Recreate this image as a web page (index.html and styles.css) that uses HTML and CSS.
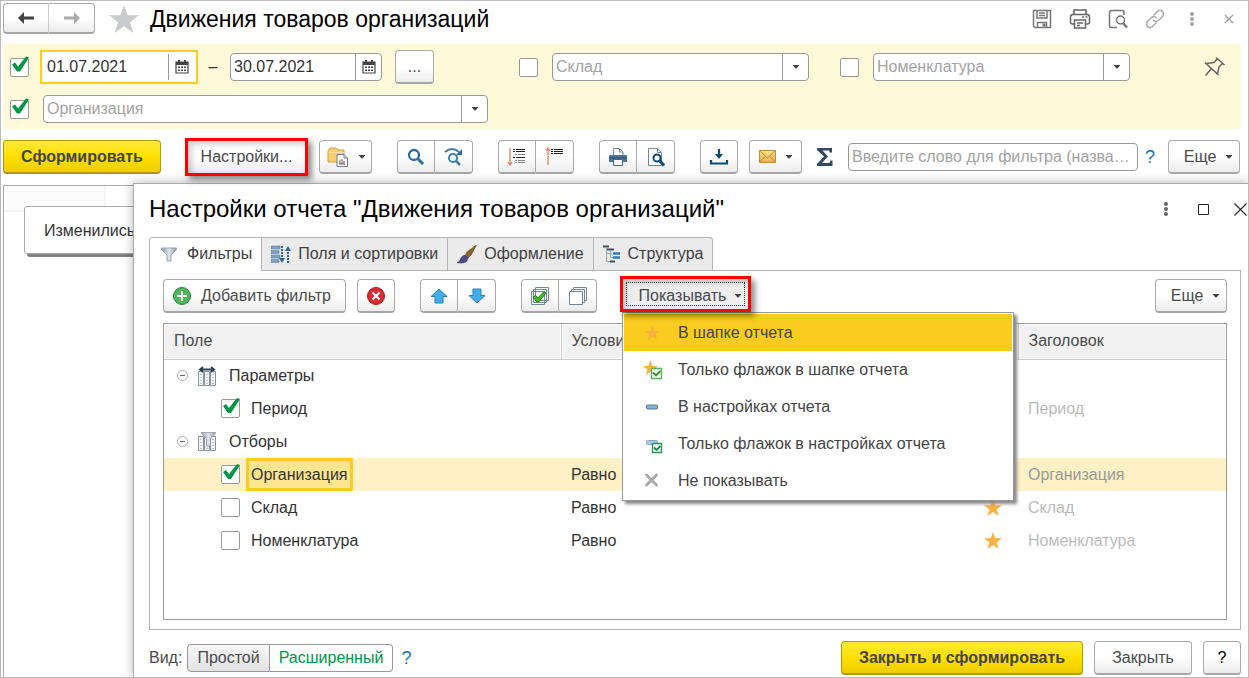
FILE: index.html
```html
<!DOCTYPE html>
<html lang="ru">
<head>
<meta charset="utf-8">
<title>Движения товаров организаций</title>
<link rel="stylesheet" href="styles.css">
</head>
<body>
<svg class="defs" aria-hidden="true">
  <defs>
    <linearGradient id="funnel-fill" x1="0" x2="1"><stop offset="0" stop-color="#8d99a6"/><stop offset=".5" stop-color="#dfe5ec"/><stop offset="1" stop-color="#8f9ba8"/></linearGradient>
    <linearGradient id="mail-fill" x1="0" y1="0" x2="0" y2="1"><stop offset="0" stop-color="#fbe08f"/><stop offset="1" stop-color="#e9b04e"/></linearGradient>
    <symbol id="star" viewBox="0 0 30 28"><path d="M15 0l3.700 10.300H30l-9 6.900L24.300 28 15 21.300 5.700 28 9 17.200 0 10.300h11.300z"/></symbol>
    <symbol id="caret" viewBox="0 0 6 4"><path d="M0 0h6v.5L3.500 3.500h-1L0 .5z" fill="#444"/></symbol>
    <symbol id="calendar" viewBox="0 0 14 14"><path d="M1 2h12v11H1z" fill="#fff" stroke="#444" stroke-width="1.200"/><path d="M1 2h12v3H1zM3 0h2v3H3zM9 0h2v3H9z" fill="#444"/><path d="M3 6.500h2v1.500H3zM6 6.500h2v1.500H6zM9 6.500h2v1.500H9zM3 9.500h2V11H3zM6 9.500h2V11H6zM9 9.500h2V11H9z" fill="#444"/></symbol>
    <symbol id="dots" viewBox="0 0 4 14"><circle cx="2" cy="2" r="2"/><circle cx="2" cy="7" r="2"/><circle cx="2" cy="12" r="2"/></symbol>
  </defs>
</svg>
<main class="app">
  <header class="titlebar">
    <div class="group nav">
      <button class="btn" type="button" aria-label="Назад"><svg width="18" height="14" viewBox="0 0 18 14"><path d="M7 1L1 7l6 6V8.500h10v-3H7z" fill="#444"/></svg></button>
      <button class="btn" type="button" aria-label="Вперед"><svg width="18" height="14" viewBox="0 0 18 14"><path d="M11 1l6 6-6 6V8.500H1v-3h10z" fill="#aaa"/></svg></button>
    </div>
    <svg class="favorite" width="30" height="28"><use href="#star"/></svg>
    <h1>Движения товаров организаций</h1>
    <div class="title-icons">
      <button type="button" aria-label="Сохранить"><svg width="20" height="20" viewBox="0 0 20 20" fill="none" stroke="#777" stroke-width="1.500"><path d="M1.500 1.500h17v17H3l-1.500-1.500zM5 1.500v7.500h10V1.500M7 4h6M7 6.500h6M5.500 18v-4.500h9V18"/><path d="M10.500 14.500h3v3h-3z" fill="#777" stroke="none"/></svg></button>
      <button type="button" aria-label="Печать"><svg width="22" height="20" viewBox="0 0 22 20" fill="none" stroke="#666" stroke-width="1.500"><path d="M5 5.500v-4.500h12v4.500M5 15H3.500Q1.500 15 1.500 13V8q0-2.500 2.500-2.500h14q2.500 0 2.500 2.500v5q0 2-2 2H17M5.500 11h11v8h-11zM8 14h6M8 16.500h3"/><path d="M13 8h2M16.500 8h2"/></svg></button>
      <button type="button" aria-label="Предварительный просмотр"><svg width="20" height="20" viewBox="0 0 20 20" fill="none" stroke="#777" stroke-width="1.500"><path d="M9 18.500H3.500q-2 0-2-2v-13q0-2 2-2h11q1.500 0 1.500 2V6"/><circle cx="12.500" cy="11" r="4"/><path d="M15 14l4 4.500" stroke-width="2.500"/></svg></button>
      <button type="button" aria-label="Ссылка"><svg width="20" height="20" viewBox="0 0 20 20" fill="none" stroke="#aaa" stroke-width="1.500"><path d="M8.500 6.500l4-4c3-3 8 1 5 5l-4 4c-2 1.500-4 1-5-.5M11.500 13.500l-4 4c-3 3-8-1-5-5l4-4c2-1.500 4-1 5 .5"/></svg></button>
      <button type="button" aria-label="Меню"><svg width="20" height="14" fill="#a5a5a5"><use href="#dots"/></svg></button>
      <button type="button" aria-label="Закрыть окно"><svg width="20" height="10" viewBox="0 0 20 10"><path d="M6 1l8 8M14 1L6 9" stroke="#999" stroke-width="1.300"/></svg></button>
    </div>
  </header>

  <section class="filters">
    <div class="filter-row">
      <input class="check" type="checkbox" checked aria-label="Период">
      <div class="field focused"><input type="text" value="01.07.2021" aria-label="Начало периода"><button type="button" aria-label="Календарь"><svg width="14" height="14"><use href="#calendar"/></svg></button></div>
      <span class="dash">–</span>
      <div class="field date"><input type="text" value="30.07.2021" aria-label="Конец периода"><button type="button" aria-label="Календарь"><svg width="14" height="14"><use href="#calendar"/></svg></button></div>
      <button class="btn small" type="button">...</button>
      <div class="filter-item">
        <input class="check" type="checkbox" aria-label="Отбор по складу">
        <div class="field combo"><input type="text" placeholder="Склад" aria-label="Склад"><button type="button" aria-label="Выбрать"><svg width="6" height="4"><use href="#caret"/></svg></button></div>
      </div>
      <div class="filter-item second">
        <input class="check" type="checkbox" aria-label="Отбор по номенклатуре">
        <div class="field combo"><input type="text" placeholder="Номенклатура" aria-label="Номенклатура"><button type="button" aria-label="Выбрать"><svg width="6" height="4"><use href="#caret"/></svg></button></div>
      </div>
      <button class="pin" type="button" aria-label="Закрепить"><svg width="22" height="22" viewBox="0 0 22 22" fill="none" stroke="#666" stroke-width="1.500"><path d="M12 1.500l8.500 7.500M13.500 2.500L10 6.500 2 7.500 13.500 18l1.500-7 4-4M1 6.500l2 1.500M7 13l-5.500 6.500M13 17.500l1.500 1.500"/></svg></button>
    </div>
    <div class="filter-row">
      <input class="check" type="checkbox" checked aria-label="Отбор по организации">
      <div class="field combo wide"><input type="text" placeholder="Организация" aria-label="Организация"><button type="button" aria-label="Выбрать"><svg width="6" height="4"><use href="#caret"/></svg></button></div>
    </div>
  </section>

  <div class="toolbar">
    <button class="btn primary generate" type="button">Сформировать</button>
    <div class="marked settings"><button class="btn" type="button">Настройки...</button></div>
    <button class="btn drop variants" type="button" aria-label="Варианты отчета"><svg width="22" height="20" viewBox="0 0 22 20"><path d="M1 4l2-3h6l2 2h6v12H1z" fill="#f8cf74" stroke="#d79b35"/><path d="M1.500 5.500H17" stroke="#fbe3a6"/><path d="M10 7.500h7l3.500 3.500v8.500H10z" fill="#fff" stroke="#6d7f92"/><path d="M17 7.500V11h3.500" fill="none" stroke="#6d7f92"/><path d="M13 17v-4" stroke="#3b9b3b"/><path d="M15 17v-5" stroke="#d33"/><path d="M17 17v-3M12 17h6" stroke="#555"/></svg><svg width="6" height="4"><use href="#caret"/></svg></button>
    <div class="group gap-wide">
      <button class="btn" type="button" aria-label="Найти"><svg width="18" height="18" viewBox="0 0 18 18" fill="none" stroke="#2a6ea5"><circle cx="7" cy="7" r="5" stroke-width="2.300"/><path d="M11 11l5 5" stroke-width="3"/></svg></button>
      <button class="btn" type="button" aria-label="Найти далее"><svg width="20" height="20" viewBox="0 0 20 20" fill="none" stroke="#3f7fae"><circle cx="9" cy="11" r="4" stroke-width="2"/><path d="M12 14l4 4" stroke-width="2.500"/><path d="M1 5q7-6 14 0" stroke-width="2"/><path d="M18 2v6h-6z" fill="#2a6ea5" stroke="none"/></svg></button>
    </div>
    <div class="group gap-wide">
      <button class="btn" type="button" aria-label="Развернуть"><svg width="20" height="20" viewBox="0 0 20 20"><path d="M3 1v17M1 15l2 3 2-3" fill="none" stroke="#f08050" stroke-width="1.300"/><path d="M6 2.500h2M9 2.500h9M6 4.500h2M9 4.500h9M6 10.500h2M9 10.500h9" stroke="#222"/><path d="M8 7.500h2M11 7.500h7M8 13.500h2M11 13.500h7M8 15.500h2M11 15.500h7" stroke="#888"/></svg></button>
      <button class="btn" type="button" aria-label="Свернуть"><svg width="20" height="20" viewBox="0 0 20 20"><path d="M3 18V1M1 4l2-3 2 3" fill="none" stroke="#f08050" stroke-width="1.300"/><path d="M6 2.500h2M9 2.500h9M6 4.500h2M9 4.500h9M6 6.500h2M9 6.500h9" stroke="#222"/></svg></button>
    </div>
    <div class="group gap-wide">
      <button class="btn" type="button" aria-label="Печать"><svg width="20" height="20" viewBox="0 0 20 20"><path d="M5.500 9V1.500h6L15 5v4" fill="#fff" stroke="#71869b"/><path d="M11.500 1.500V5H15" fill="none" stroke="#71869b"/><path d="M2 8h16q1 0 1 1v6H1V9q0-1 1-1z" fill="#4d7396"/><path d="M1 11h18" stroke="#294c6c"/><path d="M5.500 12.500h9v6h-9z" fill="#fff" stroke="#4a6682"/></svg></button>
      <button class="btn" type="button" aria-label="Просмотр"><svg width="20" height="20" viewBox="0 0 20 20"><path d="M2.500 1.500h9L15.500 5.500V18.500h-13z" fill="#fff" stroke="#71869b"/><path d="M11.500 1.500V5.500h4" fill="none" stroke="#71869b"/><circle cx="11" cy="11" r="3.500" fill="#fff" stroke="#0d4b78" stroke-width="2"/><path d="M13.500 13.500l4.500 5" stroke="#0d4b78" stroke-width="3"/></svg></button>
    </div>
    <button class="btn icon gap-wide" type="button" aria-label="Сохранить"><svg width="20" height="18" viewBox="0 0 20 18" fill="none" stroke="#0d4b78" stroke-width="2.200"><path d="M10 1v7M2 12v3.500h16V12"/><path d="M6 6h8l-4 5z" fill="#0d4b78" stroke="none"/></svg></button>
    <button class="btn drop" type="button" aria-label="Отправить"><svg width="17" height="13" viewBox="0 0 17 13"><path d="M.5.500h16v12H.5z" fill="url(#mail-fill)" stroke="#c98c2b"/><path d="M1 1l7.500 7L16 1M1 12l5-5.500M16 12l-5-5.500" fill="none" stroke="#c98c2b"/></svg><svg width="6" height="4"><use href="#caret"/></svg></button>
    <svg class="sigma" width="18" height="20" viewBox="0 0 18 20"><path d="M1 1h15v4.500h-2L13 3.500H6.500l5.500 6-6 6.500h7.500l1-2.500h2V19H1v-2l7-7.500L1 3z" fill="#34495e"/></svg>
    <input class="search" type="text" placeholder="Введите слово для фильтра (название товара, покупателя и пр.)" aria-label="Фильтр">
    <a class="help" href="#">?</a>
    <button class="btn more" type="button">Еще<svg width="6" height="4"><use href="#caret"/></svg></button>
  </div>

  <section class="sheet">
    <div class="sheet-head"></div>
    <div class="notice">Изменились</div>
  </section>

  <section class="dialog" role="dialog" aria-labelledby="dialog-title">
    <header class="dialog-head">
      <h2 id="dialog-title">Настройки отчета "Движения товаров организаций"</h2>
      <div class="window-buttons">
        <button type="button" aria-label="Меню"><svg width="4" height="14" fill="#666"><use href="#dots"/></svg></button>
        <button type="button" aria-label="Развернуть"><svg width="11" height="11" viewBox="0 0 11 11"><path d="M.5.500h10v10H.5z" fill="none" stroke="#222"/></svg></button>
        <button type="button" aria-label="Закрыть"><svg width="13" height="13" viewBox="0 0 13 13"><path d="M.5.500l12 12M12.500.500l-12 12" stroke="#333" stroke-width="1.300"/></svg></button>
      </div>
    </header>
    <div class="tabs" role="tablist">
      <button class="tab active" type="button" role="tab" aria-selected="true"><svg width="16" height="15" viewBox="0 0 16 15"><path d="M.5 1h15v1.500L10 8v6H6V8L.5 2.500z" fill="url(#funnel-fill)" stroke="#9aa5b1"/></svg>Фильтры</button>
      <button class="tab" type="button" role="tab"><svg width="20" height="19" viewBox="0 0 20 19"><path d="M0 1h9v3H0zM0 5.500h8v3H0zM0 10h9v3H0zM0 14.500h8v3H0z" fill="#7ea2bf" stroke="#5c7f9d" stroke-width=".6"/><path d="M11 1v14M17 18V3" stroke="#2d6391" stroke-width="2" stroke-dasharray="2 1"/><path d="M8 13h6l-3 5zM14 6h6l-3-5z" fill="#2d6391"/></svg>Поля и сортировки</button>
      <button class="tab" type="button" role="tab"><svg width="20" height="19" viewBox="0 0 20 19"><path d="M19.500 0L10 7l-2 4 3 2 3-3z" fill="#8a6424" stroke="#5e4316" stroke-width=".7"/><path d="M8 10.500l3 2.500c0 4-5 6-11 4.500 3-1 3-2.500 4-4.500 1-2 2.500-2.500 4-2.500z" fill="#4c4d87" stroke="#303060" stroke-width=".6"/></svg>Оформление</button>
      <button class="tab" type="button" role="tab"><svg width="18" height="18" viewBox="0 0 18 18"><path d="M0 1.500h6M4 4.500h7M7 16.500h5" stroke="#3d5366" stroke-width="2"/><path d="M3.500 2v14.500H7M3.500 8.500H9M7.500 5v7.500H10" fill="none" stroke="#9aa5ad"/><path d="M10 8.500h7M10 12.500h7" stroke="#2c7db8" stroke-width="2.500"/></svg>Структура</button>
    </div>
    <div class="panel">
      <div class="panel-tools">
        <button class="btn add" type="button"><svg width="18" height="18" viewBox="0 0 18 18"><circle cx="9" cy="9" r="8.500" fill="#4db75a" stroke="#278a35"/><path d="M9 4v10M4 9h10" stroke="#fff" stroke-width="2"/></svg>Добавить фильтр</button>
        <button class="btn icon" type="button" aria-label="Удалить"><svg width="18" height="18" viewBox="0 0 18 18"><circle cx="9" cy="9" r="8.500" fill="#d92c31" stroke="#ab1d22"/><path d="M5.500 5.500l7 7M12.500 5.500l-7 7" stroke="#fff" stroke-width="2"/></svg></button>
        <div class="group gap-wide">
          <button class="btn" type="button" aria-label="Вверх"><svg width="18" height="16" viewBox="0 0 18 16"><path d="M9 1l8 7.500h-4V15H5V8.500H1z" fill="#42adea" stroke="#2c7fb4"/></svg></button>
          <button class="btn" type="button" aria-label="Вниз"><svg width="18" height="16" viewBox="0 0 18 16"><path d="M9 15L1 7.500h4V1h8v6.500h4z" fill="#42adea" stroke="#2c7fb4"/></svg></button>
        </div>
        <div class="group gap-wide">
          <button class="btn" type="button" aria-label="Установить флажки"><svg width="20" height="20" viewBox="0 0 20 20" fill="#fff" stroke="#71869b"><path d="M5.500 1.500h13v13h-13zM3.500 3.500h13v13h-13zM1.500 5.500h13v13h-13z"/><path d="M3 11l2.500-1.500L8 12l6-6.500L16 7l-7.500 9H7z" fill="#3fc523" stroke="#187b12"/></svg></button>
          <button class="btn" type="button" aria-label="Снять флажки"><svg width="20" height="20" viewBox="0 0 20 20" fill="#fff" stroke="#71869b"><path d="M5.500 1.500h13v13h-13z"/><path d="M3.500 3.500h13v13h-13z"/><path d="M1.500 5.500h13v13h-13z"/></svg></button>
        </div>
        <div class="menu-anchor">
          <div class="marked show"><button class="btn" type="button" aria-haspopup="menu" aria-expanded="true"><span>Показывать</span><svg width="6" height="4"><use href="#caret"/></svg></button></div>
          <div class="menu" role="menu">
            <button class="current" type="button" role="menuitem"><svg width="22" height="20" viewBox="0 0 22 20"><path d="M10.500 2l2 6H18l-4.500 3.500 1.800 5.500-4.800-3.300L5.700 17l1.800-5.500L3 8h5.500z" fill="#fbb040"/></svg>В шапке отчета</button>
            <button type="button" role="menuitem"><svg width="22" height="20" viewBox="0 0 22 20"><path d="M8.500 0l2 6H16l-4.500 3.500 1.800 5.500-4.800-3.300L3.700 15l1.800-5.500L1 6h5.500z" fill="#fbb040"/><path d="M9.500 8.500h10v10h-10z" fill="#fff" stroke="#4cb950" stroke-width="1.300"/><path d="M11 12.500l3 3 4.500-4.500" fill="none" stroke="#388e20" stroke-width="1.800"/></svg>Только флажок в шапке отчета</button>
            <button type="button" role="menuitem"><svg width="22" height="20" viewBox="0 0 22 20"><rect x="4.500" y="8" width="11" height="4" rx="1" fill="#8db0cd" stroke="#4f7ba0"/></svg>В настройках отчета</button>
            <button type="button" role="menuitem"><svg width="22" height="20" viewBox="0 0 22 20"><rect x="4.500" y="6.500" width="11" height="4" rx="1" fill="#a9c8ec" stroke="#83a7d0"/><path d="M10.500 9.500h9v9h-9z" fill="#fff" stroke="#219653" stroke-width="1.300"/><path d="M12 13.500l2.500 2.500 4-4" fill="none" stroke="#178745" stroke-width="1.800"/></svg>Только флажок в настройках отчета</button>
            <button type="button" role="menuitem"><svg width="22" height="20" viewBox="0 0 22 20"><path d="M4.500 4l10 10M14.500 4l-10 10" stroke="#aaa" stroke-width="3" stroke-linecap="round"/></svg>Не показывать</button>
          </div>
        </div>
        <button class="btn more" type="button">Еще<svg width="6" height="4"><use href="#caret"/></svg></button>
      </div>
      <div class="grid">
        <table>
          <colgroup><col class="c-field"><col class="c-cond"><col><col class="c-mode"><col class="c-title"></colgroup>
          <thead><tr><th>Поле</th><th>Условие</th><th></th><th></th><th>Заголовок</th></tr></thead>
          <tbody>
            <tr><td><div class="node"><svg width="11" height="11" viewBox="0 0 11 11" fill="none"><circle cx="5.500" cy="5.500" r="5" stroke="#aaa"/><path d="M3 5.500h5" stroke="#666"/></svg><svg width="18" height="20" viewBox="0 0 18 20"><path d="M.5 5.500h5v14h-5zM6.500 5.500h5v14h-5zM12.500 5.500h5v14h-5z" fill="#f3f5f7" stroke="#8795a1"/><path d="M3 8v10M9 8v10M15 8v10" stroke="#8795a1" stroke-dasharray="1 2"/><path d="M3 3.500h12M5 1L2 3.500 5 6M13 1l3 2.500L13 6" fill="none" stroke="#2d4053" stroke-width="1.800"/></svg>Параметры</div></td><td></td><td></td><td></td><td></td></tr>
            <tr><td><label class="leaf"><input class="check" type="checkbox" checked><span>Период</span></label></td><td></td><td></td><td></td><td>Период</td></tr>
            <tr><td><div class="node"><svg width="11" height="11" viewBox="0 0 11 11" fill="none"><circle cx="5.500" cy="5.500" r="5" stroke="#aaa"/><path d="M3 5.500h5" stroke="#666"/></svg><svg width="18" height="20" viewBox="0 0 18 20"><path d="M.5 4.500h5v14h-5zM6.500 4.500h5v14h-5zM12.500 4.500h5v14h-5z" fill="#f3f5f7" stroke="#8795a1"/><path d="M3 7v10M9 7v10M15 7v10" stroke="#8795a1" stroke-dasharray="1 2"/><path d="M3 .5h15L12.500 7v7h-4V7z" fill="url(#funnel-fill)" stroke="#8795a1" stroke-width=".7"/></svg>Отборы</div></td><td></td><td></td><td></td><td></td></tr>
            <tr class="selected"><td><label class="leaf"><input class="check" type="checkbox" checked><span>Организация</span></label></td><td>Равно</td><td></td><td></td><td>Организация</td></tr>
            <tr><td><label class="leaf"><input class="check" type="checkbox"><span>Склад</span></label></td><td>Равно</td><td></td><td><svg class="mode" width="18" height="17"><use href="#star"/></svg></td><td>Склад</td></tr>
            <tr><td><label class="leaf"><input class="check" type="checkbox"><span>Номенклатура</span></label></td><td>Равно</td><td></td><td><svg class="mode" width="18" height="17"><use href="#star"/></svg></td><td>Номенклатура</td></tr>
          </tbody>
        </table>
      </div>
    </div>
    <footer class="dialog-foot">
      <span>Вид:</span>
      <div class="group toggle"><button class="btn" type="button">Простой</button><button class="btn on" type="button">Расширенный</button></div>
      <a class="help" href="#">?</a>
      <button class="btn primary apply" type="button">Закрыть и сформировать</button>
      <button class="btn close" type="button">Закрыть</button>
      <button class="btn icon question" type="button">?</button>
    </footer>
  </section>
</main>
</body>
</html>
```

FILE: styles.css
```css
* { box-sizing: border-box; }
body { margin: 0; font: 16px/20px "Liberation Sans", Arial, sans-serif; color: #333; background: #fff; }
button, input { font: inherit; color: inherit; }
button { padding: 0; border: 0; background: none; }
svg { display: block; flex: none; }
h1, h2 { margin: 0; font-size: 24px; line-height: 32px; font-weight: 400; color: #000; white-space: nowrap; }
h1 { font-size: 23px; }
.defs { position: absolute; width: 0; height: 0; }

.app { position: relative; display: flex; flex-direction: column; min-height: 100vh; padding-left: 2px; border: 1px solid #bbb; overflow: hidden; }

/* Buttons */
.btn { display: flex; flex: none; align-items: center; justify-content: center; height: 34px; border: 1px solid #aaa; border-bottom: 2px solid #a6a6a6; border-radius: 4px; background: linear-gradient(#fff 50%, #ebebeb); color: #4a4a4a; white-space: nowrap; }
.btn.primary { border-color: #b09a00; background: linear-gradient(#ffe93b, #ffe000 50%, #efcc00); color: #444; font-weight: 700; }
.btn.icon { width: 38px; }
.btn.small { width: 39px; }
.btn.more { width: 72px; gap: 10px; padding-left: 8px; margin-left: auto; }
.btn.drop { width: 53px; gap: 10px; }
.group { display: flex; flex: none; }
.group .btn { width: 38px; }
.group .btn:first-child { border-radius: 4px 0 0 4px; }
.group .btn + .btn { border-left: 0; border-radius: 0 4px 4px 0; }
.marked { position: relative; z-index: 3; flex: none; border: 3px solid #f00; box-shadow: 4px 4px 6px rgba(0, 0, 0, .45), inset 3px 3px 6px rgba(0, 0, 0, .25); }
.marked .btn { width: 100%; border: 0; border-radius: 0; background: linear-gradient(rgba(255, 255, 255, .2) 50%, rgba(0, 0, 0, .08)); }
.help { color: #1271bb; text-decoration: none; font-size: 18px; }

/* Title bar */
.titlebar { display: flex; align-items: center; height: 43px; padding: 0 9px 8px 0; }
.nav .btn { width: 46px; height: 31px; }
.nav .btn:first-child { border-right-color: #ccc; }
.favorite { margin: 0 11px 0 14px; fill: #c9cbcd; }
.title-icons { display: flex; align-items: center; gap: 17px; margin-left: auto; }

/* Quick filters */
.filters { display: flex; flex-direction: column; margin-right: 7px; padding: 6px 15px 3px 7px; background: #fef9d9; }
.filter-row { display: flex; align-items: center; height: 34px; }
.filter-row + .filter-row { margin-top: 8px; }
.check { appearance: none; position: relative; flex: none; width: 19px; height: 19px; margin: 0; border: 1px solid #999; border-radius: 2px; background: #fff; }
.check:checked::after { content: ""; position: absolute; left: 1px; top: -3px; width: 18px; height: 17px; background: #009646; clip-path: polygon(0 9px, 3px 7px, 6px 11px, 14px 1px, 17px 2px, 8px 16px, 5px 16px); }
.field { display: flex; height: 28px; border: 1px solid #999; border-radius: 4px; background: #fff; overflow: hidden; }
.field input { flex: 1; min-width: 0; padding: 0 3px; border: 0; background: none; outline: 0; }
.field button { display: flex; align-items: center; justify-content: center; width: 26px; border-left: 1px solid #999; }
::placeholder { color: #a3a3a3; opacity: 1; }
.field.focused { width: 158px; height: 34px; margin-left: 11px; padding: 2px; border: 2px solid #fc2; border-radius: 0; }
.field.focused button { width: 26px; }
.dash { width: 32px; text-align: center; padding-right: 2px; }
.field.date { width: 152px; margin-right: 13px; }
.filter-item { display: flex; align-items: center; margin-left: 85px; }
.filter-item.second { margin-left: 31px; }
.combo { width: 257px; margin-left: 14px; }
.combo.wide { width: 445px; }
.pin { margin-left: auto; }

/* Command bar */
.toolbar { display: flex; align-items: center; height: 38px; margin: 9px 8px 0 0; }
.toolbar .generate { width: 158px; }
.settings { width: 123px; height: 38px; margin: 0 11px 0 24px; }
.settings .btn { height: 32px; }
.gap-wide { margin-left: 25px; }
.toolbar .icon { margin-right: 11px; }
.sigma { margin: 0 14px; }
.search { flex: 1; min-width: 0; height: 28px; padding: 0 3px; border: 1px solid #999; border-radius: 4px; background: #fff; text-overflow: ellipsis; }
.toolbar .help { margin: 0 13px 0 7px; }
.toolbar .more { margin: 0; }

/* Report sheet behind the dialog */
.sheet { flex: 1; margin-top: 9px; border: 1px solid #aaa; border-right: 0; border-bottom: 0; }
.sheet-head { width: 102px; height: 26px; margin-bottom: -6px; border-right: 2px solid #f5f5f5; border-bottom: 2px solid #f5f5f5; background: #fcfcfc; }
.notice { position: relative; width: 400px; margin-left: 20px; padding: 14px 19px 12px; border: 1px solid #aaa; border-radius: 3px; background: #fff; box-shadow: 3px 3px 0 #808080; }

/* Settings window */
.dialog { position: absolute; left: 132px; right: 0; top: 182px; bottom: 0; display: flex; flex-direction: column; padding: 0 7px 2px 15px; border: solid #aaa; border-width: 1px 0 0 1px; background: #fff; box-shadow: 0 0 10px rgba(0, 0, 0, .3); }
.dialog-head { display: flex; align-items: center; justify-content: space-between; height: 53px; margin-right: -6px; padding-bottom: 3px; }
.window-buttons { display: flex; align-items: center; gap: 30px; }
.window-buttons button:last-child { margin-left: -5px; }
.tabs { display: flex; position: relative; z-index: 1; }
.tab { display: flex; align-items: center; gap: 7px; height: 34px; padding: 0 9px; border: 1px solid #b3b3b3; border-left: 0; background: #ebebeb; color: #404040; white-space: nowrap; }
.tab.active { gap: 10px; padding-left: 11px; border-left: 1px solid #b3b3b3; border-bottom-color: #fff; border-radius: 3px 0 0; background: #fff; }
.tab:last-child { border-radius: 0 3px 0 0; }
.panel { flex: 1; display: flex; flex-direction: column; margin-top: -1px; padding: 8px 13px 9px; border: 1px solid #b3b3b3; }
.panel-tools { display: flex; align-items: center; height: 34px; }
.add { width: 183px; gap: 10px; padding-right: 5px; margin-right: 11px; }
.menu-anchor { position: relative; z-index: 2; margin-left: 23px; }
.show { width: 131px; height: 36px; margin-top: -4px; }
.show .btn { height: 30px; gap: 9px; padding: 3px 3px 0 12px; outline: 1px dotted #333; outline-offset: -4px; background: #eee; box-shadow: inset 3px 3px 5px rgba(0, 0, 0, .2); }
.menu { position: absolute; left: 2px; top: 32px; width: 392px; padding: 1px; border: 1px solid #999; background: #fff; box-shadow: 3px 3px 3px #888; }
.menu button { display: flex; align-items: center; gap: 14px; width: 100%; height: 37px; padding-left: 18px; color: #444; }
.menu .current { background: #facc20; }
.grid { flex: 1; margin-top: 10px; border: 1px solid #999; }
table { width: 100%; border-collapse: collapse; table-layout: fixed; }
.c-field { width: 397px; }
.c-cond { width: 130px; }
.c-mode { width: 50px; }
.c-title { width: 208px; }
th { height: 35px; padding: 0 10px; border: solid #ccc; border-width: 0 0 1px 1px; background: #f1f1f1; font-weight: 400; text-align: left; color: #4a4a4a; box-shadow: inset 0 0 0 1px #fff; }
th:first-child { border-left: 0; }
td { height: 33px; padding: 0 10px; }
td:last-child { color: #bbb; }
.selected td { background: #fef1c5; }
.selected td:last-child { color: #999; }
.node { display: flex; align-items: center; gap: 13px; padding-left: 3px; }
.node svg:first-child { margin-right: -3px; }
.leaf { display: flex; align-items: center; padding-left: 47px; }
.leaf span { margin-left: 6px; padding: 0 5px; line-height: 33px; }
.selected .leaf span { padding: 0 2px; line-height: 27px; border: 3px solid #fc2; background: #fee590; }
.mode { margin-left: 6px; fill: #fbb040; }
.dialog-foot { display: flex; align-items: center; height: 34px; margin-top: 11px; color: #4a4a4a; }
.toggle { margin: 0 8px 0 5px; }
.group.toggle .btn { width: auto; height: 28px; padding: 0 9px; border: 1px solid #999; background: linear-gradient(#f8f8f8, #e2e2e2); }
.group.toggle .on { border-left: 0; background: #fff; color: #009646; }
.apply { width: 242px; margin-left: auto; }
.close { width: 98px; margin: 0 11px; }
.question { color: #000; }
```
